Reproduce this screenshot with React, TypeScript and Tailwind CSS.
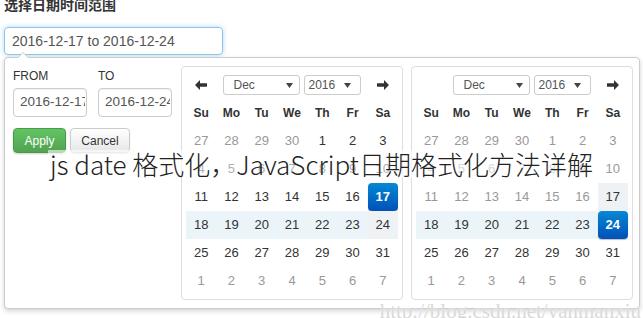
import React from "react";

type Cell = { d: number; kind: "off" | "norm" | "active" | "range" | "end" };

const Arrow = ({ dir }: { dir: "left" | "right" }) => (
  <svg width="12" height="10" viewBox="0 0 12 10" className={dir === "right" ? "rotate-180" : ""}>
    <path d="M0 5 L5 0 L5 3.2 L12 3.2 L12 6.8 L5 6.8 L5 10 Z" fill="#333" />
  </svg>
);

const Caret = () => (
  <svg width="7" height="5" viewBox="0 0 7 5">
    <path d="M0 0 L7 0 L3.5 5 Z" fill="#444" />
  </svg>
);

function buildCal(second: boolean): Cell[][] {
  const rows: number[][] = [
    [27, 28, 29, 30, 1, 2, 3],
    [4, 5, 6, 7, 8, 9, 10],
    [11, 12, 13, 14, 15, 16, 17],
    [18, 19, 20, 21, 22, 23, 24],
    [25, 26, 27, 28, 29, 30, 31],
    [1, 2, 3, 4, 5, 6, 7],
  ];
  return rows.map((r, ri) =>
    r.map((d, ci) => {
      const prev = ri === 0 && ci < 4;
      const next = ri === 5;
      if (prev || next) return { d, kind: "off" };
      if (second) {
        if (d < 17) return { d, kind: "off" };
        if (d === 17) return { d, kind: "end" };
        if (d > 17 && d < 24) return { d, kind: "range" };
        if (d === 24) return { d, kind: "active" };
        return { d, kind: "norm" };
      }
      if (d === 17) return { d, kind: "active" };
      if (d > 17 && d < 24) return { d, kind: "range" };
      if (d === 24) return { d, kind: "end" };
      return { d, kind: "norm" };
    })
  );
}

const cellCls: Record<Cell["kind"], string> = {
  off: "text-[#999]",
  norm: "text-[#333]",
  active:
    "text-white font-bold rounded-[4px] bg-gradient-to-b from-[#0a88d4] to-[#0450b8] shadow-[0_1px_1px_rgba(0,0,0,0.25)]",
  range: "text-[#333] bg-[#ebf4f8]",
  end: "text-[#333] bg-[#eef2f4]",
};

function Calendar({ second }: { second: boolean }) {
  const rows = buildCal(second);
  return (
    <div className="w-[222px] border border-[#ddd] rounded-[4px] bg-white p-[4px]">
      <div className="h-[28px] grid grid-cols-[30px_151px_31px] items-center">
        <div className="flex justify-center">{second ? null : <Arrow dir="left" />}</div>
        <div className="flex justify-center gap-[4px]">
          <div className="w-[77px] h-[20px] border border-[#ccc] rounded-[3px] flex items-center justify-between pl-[10px] pr-[6px] text-[12px] text-[#555]">
            <span>Dec</span>
            <Caret />
          </div>
          <div className="w-[57px] h-[20px] border border-[#ccc] rounded-[3px] flex items-center justify-between pl-[4px] pr-[9px] text-[12px] text-[#555]">
            <span>2016</span>
            <Caret />
          </div>
        </div>
        <div className="flex justify-center">
          <Arrow dir="right" />
        </div>
      </div>
      <div className="grid grid-cols-7 h-[28px] items-center text-[12px] font-bold text-[#333] text-center">
        {["Su", "Mo", "Tu", "We", "Th", "Fr", "Sa"].map((w) => (
          <div key={w}>{w}</div>
        ))}
      </div>
      {rows.map((r, i) => (
        <div key={i} className="grid grid-cols-7 h-[28px] text-[13px] text-center">
          {r.map((c, j) => (
            <div key={j} className={"flex items-center justify-center " + cellCls[c.kind]}>
              {c.d}
            </div>
          ))}
        </div>
      ))}
    </div>
  );
}

export default function App() {
  return (
    <div
      className="relative w-[643px] h-[318px] overflow-hidden bg-white"
      style={{ fontFamily: '"Liberation Sans", Arial, sans-serif' }}
    >
      <div
        className="pl-[4px] h-[27px] -mt-[3px] text-[14px] leading-[14px] font-bold text-[#333]"
        style={{ fontFamily: '"Noto Sans CJK SC", sans-serif' }}
      >
        选择日期时间范围
      </div>
      <div className="relative mt-[3px] ml-[4px] w-[219px] h-[28px] border border-[#8cc4ea] rounded-[4px] shadow-[0_0_5px_rgba(102,175,233,0.5)] flex items-center px-[7px] text-[14px] text-[#555]">
        2016-12-17 to 2016-12-24
      </div>
      <div className="relative mt-[2px] ml-[4px] w-[636px] h-[252px] border border-[#ccc] rounded-[4px] bg-white shadow-[0_2px_5px_rgba(0,0,0,0.18)] flex items-start pt-[8px] pl-[8px]">
        <div className="absolute -top-[6px] left-[12px] w-0 h-0 border-l-[6px] border-r-[6px] border-b-[6px] border-l-transparent border-r-transparent border-b-[#ccc]" />
        <div className="absolute -top-[5px] left-[13px] w-0 h-0 border-l-[5px] border-r-[5px] border-b-[5px] border-l-transparent border-r-transparent border-b-white" />
        <div className="w-[159px] pt-[3px]">
          <div className="flex gap-[11px]">
            <div className="w-[74px]">
              <div className="text-[12px] text-[#333] leading-[14px] h-[19px]">FROM</div>
              <div className="h-[29px] border border-[#ccc] rounded-[4px] flex items-center pl-[6px] text-[13.5px] text-[#555] shadow-[inset_0_1px_1px_rgba(0,0,0,0.06)]">
                <span className="block w-[65px] overflow-hidden whitespace-nowrap">2016-12-17</span>
              </div>
            </div>
            <div className="w-[74px]">
              <div className="text-[12px] text-[#333] leading-[14px] h-[19px]">TO</div>
              <div className="h-[29px] border border-[#ccc] rounded-[4px] flex items-center pl-[6px] text-[13.5px] text-[#555] shadow-[inset_0_1px_1px_rgba(0,0,0,0.06)]">
                <span className="block w-[65px] overflow-hidden whitespace-nowrap">2016-12-24</span>
              </div>
            </div>
          </div>
          <div className="flex gap-[4px] mt-[11px]">
            <div className="w-[53px] h-[25px] rounded-[4px] border border-[#4a9a4a] bg-gradient-to-b from-[#62c462] to-[#51a351] text-white text-[12px] flex items-center justify-center shadow-[0_1px_2px_rgba(0,0,0,0.2)]">
              Apply
            </div>
            <div className="w-[60px] h-[25px] rounded-[4px] border border-[#ccc] bg-gradient-to-b from-white to-[#e6e6e6] text-[#333] text-[12px] flex items-center justify-center shadow-[0_1px_2px_rgba(0,0,0,0.1)]">
              Cancel
            </div>
          </div>
        </div>
        <div className="ml-[9px]">
          <Calendar second={false} />
        </div>
        <div className="ml-[8px]">
          <Calendar second={true} />
        </div>
      </div>
      <div
        className="absolute left-[48px] top-[150px] text-[26px] leading-[28px] font-light text-[#222] whitespace-nowrap bg-white/60 px-[2px]"
        style={{ fontFamily: '"Noto Sans CJK SC", sans-serif' }}
      >
        js date 格式化，JavaScript日期格式化方法详解
      </div>
      <div
        className="absolute right-[2px] -bottom-[5px] text-[21px] leading-[24px] text-[#d9d9d9] whitespace-nowrap"
        style={{ fontFamily: '"Liberation Serif", serif', textShadow: "0 0 1px #fff" }}
      >
        http://blog.csdn.net/yanmanxiu
      </div>
    </div>
  );
}
